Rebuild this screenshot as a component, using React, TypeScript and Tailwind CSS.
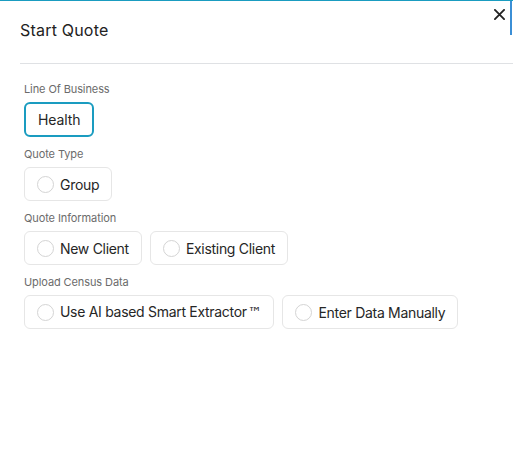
import { useState } from "react";

type Option = { id: string; label: string; tm?: boolean };

const SECTIONS: { title: string; radio: boolean; options: Option[] }[] = [
  { title: "Line Of Business", radio: false, options: [{ id: "health", label: "Health" }] },
  { title: "Quote Type", radio: true, options: [{ id: "group", label: "Group" }] },
  {
    title: "Quote Information",
    radio: true,
    options: [
      { id: "new", label: "New Client" },
      { id: "existing", label: "Existing Client" },
    ],
  },
  {
    title: "Upload Census Data",
    radio: true,
    options: [
      { id: "ai", label: "Use AI based Smart Extractor", tm: true },
      { id: "manual", label: "Enter Data Manually" },
    ],
  },
];

export default function App() {
  const [selected, setSelected] = useState<Record<string, string>>({});

  return (
    <div
      className="relative w-[513px] h-[466px] bg-white border-t border-[#1a9cc0] overflow-hidden"
      style={{ fontFamily: "Inter, 'Noto Sans', sans-serif" }}
    >
      <div className="absolute right-[1px] top-0 w-[2px] h-[34px] bg-[#3b8fd6]" />
      <button className="absolute right-[6px] top-[6px] p-0.5 text-[#222]">
        <svg width="11" height="11" viewBox="0 0 12 12" fill="none" stroke="currentColor" strokeWidth="2">
          <path d="M1 1l10 10M11 1L1 11" strokeLinecap="round" />
        </svg>
      </button>

      <div className="ml-5 h-[63px] border-b border-[#dfe1e4] flex items-center">
        <h2 className="text-[16px] text-[#222] tracking-[0.2px] -mt-[4px]">Start Quote</h2>
      </div>

      <div className="px-6 pt-[17px]">
        {SECTIONS.map(section => (
          <div key={section.title} className="mb-[9px]">
            <div className="text-[11px] leading-4 text-[#6b6b6b] tracking-[-0.1px] mb-[5px]">{section.title}</div>
            <div className="flex gap-2">
              {section.options.map(opt =>
                section.radio ? (
                  <button
                    key={opt.id}
                    onClick={() => setSelected(s => ({ ...s, [section.title]: opt.id }))}
                    className="h-[34px] pl-[12px] pr-[12px] flex items-center gap-[6px] border border-[#e6e6e6] rounded-[6px] text-[14px] text-[#262626] tracking-[-0.3px]"
                  >
                    <span
                      className={`w-[17px] h-[17px] rounded-full border ${selected[section.title] === opt.id ? "border-[5px] border-[#1a9cc0]" : "border-[#d4d4d4]"}`}
                    />
                    <span>
                      {opt.label}
                      {opt.tm && <span className="-ml-[1px] pl-[2px] text-[14px]" style={{ fontFamily: "'DejaVu Sans', sans-serif" }}>™</span>}
                    </span>
                  </button>
                ) : (
                  <button
                    key={opt.id}
                    className="h-[35px] px-[12px] flex items-center border-2 border-[#1a9cc0] rounded-[6px] text-[14px] text-[#262626] tracking-[-0.1px]"
                  >
                    {opt.label}
                  </button>
                )
              )}
            </div>
          </div>
        ))}
      </div>
    </div>
  );
}
